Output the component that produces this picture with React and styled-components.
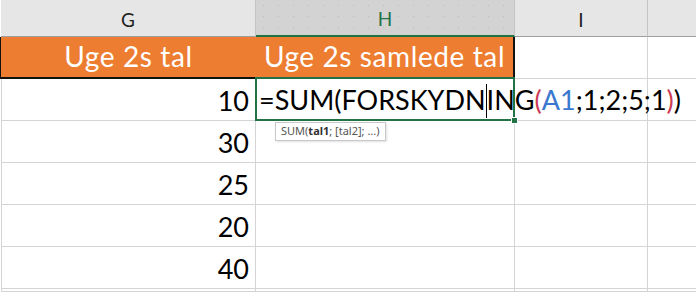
import React from 'react'
import styled, {createGlobalStyle, css} from 'styled-components'

const Global = createGlobalStyle`
  html, body { margin:0; padding:0; background:#fff; }
  body { width:696px; height:296px; overflow:hidden; font-family:Lato, "Liberation Sans", sans-serif; }
`;

const GREEN = '#217346';
const GRID = '#d4d4d4';

const Sheet = styled.div`
  display:grid;
  grid-template-columns:255px 259px 133px 60px;
  grid-template-rows:37px repeat(6, 42px);
  padding-left:1px;
`;

const ColHead = styled.div`
  box-sizing:border-box;
  display:flex;
  align-items:center;
  justify-content:center;
  font-family:Lato, "Liberation Sans", sans-serif;
  font-size:19px;
  color:#222;
  background:#e6e6e6;
  border-right:1px solid #c4c4c4;
  border-bottom:1px solid #9e9e9e;
  padding-top:2px;
  ${p => p.$active && css`
    background-color:#d3d3d3;
    background-image:radial-gradient(#bcbcbc 0.7px, transparent 1px);
    background-size:15px 11px;
    color:${GREEN};
    border-bottom:2px solid ${GREEN};
  `}
`;

const Cell = styled.div`
  box-sizing:border-box;
  position:relative;
  display:flex;
  align-items:center;
  justify-content:${p => p.$align || 'flex-start'};
  border-right:1px solid ${GRID};
  border-bottom:1px solid ${GRID};
  ${p => p.$first && css`border-left:1px solid ${GRID};`}
  font-family:Lato, "Liberation Sans", sans-serif;
  font-size:27px;
  color:#000;
  padding:2px 6px 0 3px;
  white-space:nowrap;
`;

const TitleCell = styled(Cell)`
  background:#ed7d31;
  color:#fff;
  justify-content:center;
  font-size:28px;
  letter-spacing:0.6px;
  border-bottom:2px solid #111;
  border-right:${p => p.$last ? '2px solid #111' : 'none'};
  ${p => p.$first && css`border-left:1px solid #111;`}
  margin-left:${p => p.$first ? '-1px' : '0'};
  padding:0 0 2px;
`;

const ActiveCell = styled(Cell)`
  overflow:visible;
  z-index:2;
  &::after{
    content:'';
    position:absolute;
    left:-1px; top:-2px; right:-1px; bottom:-1px;
    border:2px solid ${GREEN};
    pointer-events:none;
  }
  &::before{
    content:'';
    position:absolute;
    right:-4px; bottom:-4px;
    width:5px; height:5px;
    background:${GREEN};
    border:1px solid #fff;
    z-index:3;
  }
`;

const Formula = styled.span`
  position:relative;
  z-index:4;
  span.p{ color:#cc3b55; }
  span.r{ color:#3a78d0; }
`;

const Caret = styled.span`
  display:inline-block;
  width:0;
  height:34px;
  border-left:1px solid #000;
  vertical-align:middle;
  margin:-4px 0 0;
`;

const Tip = styled.div`
  position:absolute;
  left:19px;
  top:43px;
  padding:1px 5px 2px;
  background:#fff;
  border:1px solid #c8c8c8;
  box-shadow:1px 1px 2px rgba(0,0,0,0.12);
  font-family:"Noto Sans", "Open Sans", sans-serif;
  font-size:11px;
  line-height:14px;
  color:#555;
  b{ color:#333; }
`;

const values = [30, 25, 20, 40, ''];

export default function App(){
  return (
    <>
      <Global />
      <Sheet>
        <ColHead>G</ColHead>
        <ColHead $active>H</ColHead>
        <ColHead>I</ColHead>
        <ColHead />

        <TitleCell $first>Uge 2s tal</TitleCell>
        <TitleCell $last>Uge 2s samlede tal</TitleCell>
        <Cell />
        <Cell />

        <Cell $first $align="flex-end">10</Cell>
        <ActiveCell>
          <Formula>
            =SUM(FORSKYDN<Caret />ING<span className="p">(</span><span className="r">A1</span>;1;2;5;1<span className="p">)</span>)
          </Formula>
          <Tip>SUM(<b>tal1</b>; [tal2]; ...)</Tip>
        </ActiveCell>
        <Cell />
        <Cell />

        {values.map((v, i) => (
          <React.Fragment key={i}>
            <Cell $first $align="flex-end">{v}</Cell>
            <Cell />
            <Cell />
            <Cell />
          </React.Fragment>
        ))}
      </Sheet>
    </>
  )
}
